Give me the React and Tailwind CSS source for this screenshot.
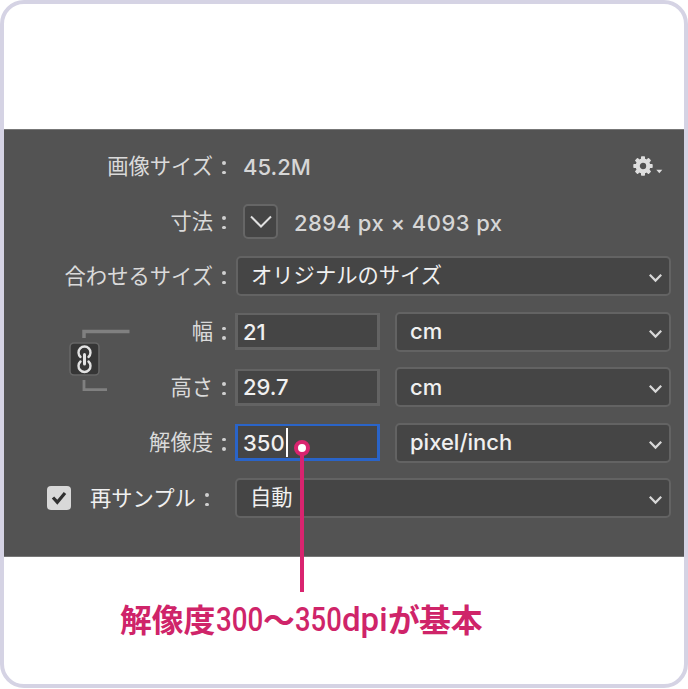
const labelClass =
  "w-[213px] shrink-0 pt-px text-right whitespace-nowrap text-[21.3px] text-[#dadada]";

const Chevron = () => (
  <svg
    className="ml-auto mr-[6px] mt-[4px] shrink-0"
    width="15"
    height="10"
    viewBox="0 0 15 10"
    fill="none"
    stroke="#d8d8d8"
    strokeWidth="2.2"
  >
    <path d="M1.8 1.8 L7.5 7.6 L13.2 1.8" />
  </svg>
);

const Colon = () => (
  <div className="flex w-[23px] shrink-0 flex-col items-center gap-[6px] pr-px pt-[3px]">
    <span className="size-[3.5px] rounded-full bg-[#d0d0d0]" />
    <span className="size-[3.5px] rounded-full bg-[#d0d0d0]" />
  </div>
);

const Label = ({ children }) => (
  <>
    <div className={labelClass}>{children}</div>
    <Colon />
  </>
);

const Select = ({ children, className }) => (
  <div
    className={`flex h-[40px] items-center rounded-[5px] border-2 border-[#636363] bg-[#454545] pl-[13px] text-[#f0f0f0] ${className}`}
  >
    <span className="whitespace-nowrap">{children}</span>
    <Chevron />
  </div>
);

const NumberField = ({ value, active }) => (
  <div
    className={`flex h-[37px] w-[145px] shrink-0 items-center border-[3px] border-t-2 bg-[#454545] pl-[5px] text-[22px] font-medium text-[#f0f0f0] ${
      active ? "border-[#2a64c8]" : "border-[#636363]"
    }`}
  >
    <span className="pt-[2px]">{value}</span>
    {active && <span className="ml-px h-[29px] w-[2px] bg-white" />}
  </div>
);

const LinkBracket = () => (
  <div className="absolute left-[61px] top-[197px]">
    <svg width="66" height="66" viewBox="0 0 66 66" fill="none">
      <path d="M19 11 V4.5 H64.5" stroke="#808080" strokeWidth="3.5" />
      <path d="M19 53 V62.7 H42" stroke="#808080" strokeWidth="2.8" />
      <rect
        x="5"
        y="16"
        width="29"
        height="32"
        rx="4"
        fill="#363636"
        stroke="#666666"
        strokeWidth="1.6"
      />
      <g stroke="#e2e2e2" strokeWidth="2.4" strokeLinecap="round">
        <path d="M15.5 30 A6 6 0 1 1 23.5 30" />
        <path d="M15.5 34.5 A6 6 0 1 0 23.5 34.5" />
        <path d="M19.5 27.5 V37" strokeWidth="3" />
      </g>
    </svg>
  </div>
);

const Gear = () => (
  <svg width="31" height="20" viewBox="0 0 31 20" fill="#dedede">
    {[0, 45, 90, 135, 180, 225, 270, 315].map((angle) => (
      <rect
        key={angle}
        x="8"
        y="0.3"
        width="4"
        height="4.5"
        rx="0.8"
        transform={`rotate(${angle} 10 10)`}
      />
    ))}
    <circle cx="10" cy="10" r="5.3" fill="none" stroke="#dedede" strokeWidth="4.2" />
    <path d="M23.3 13.8 H29.3 L26.3 17.2 Z" />
  </svg>
);

const SizeRow = ({ label, value, unit, active }) => (
  <div className="flex h-[55.5px] items-center">
    <Label>{label}</Label>
    <div className="-ml-px">
      <NumberField value={value} active={active} />
    </div>
    <Select className="ml-[15px] w-[276px] text-[22px] font-medium">
      {unit}
    </Select>
  </div>
);

const SizePanel = () => (
  <div className="relative mt-[125px] h-[428px] w-[680px] border-y border-[#777777] bg-[#535353] pt-[8px] font-['Inter','Noto_Sans_CJK_JP',sans-serif]">
    {/* File size */}
    <div className="flex h-[56px] items-center">
      <div className="-ml-[4px] flex items-center">
        <Label>画像サイズ</Label>
        <span className="ml-[7px] pt-[3px] text-[22px] font-medium text-[#d6d6d6]">
          45.2M
        </span>
      </div>
      <div className="ml-auto mr-[20px] -mt-px">
        <Gear />
      </div>
    </div>

    <div className="-ml-[4px]">
      {/* Dimensions */}
      <div className="flex h-[54.5px] items-center">
        <Label>寸法</Label>
        <div className="ml-[7px] mt-px flex size-[35px] items-center justify-center rounded-[5px] border-2 border-[#666666] bg-[#454545]">
          <svg width="24" height="14" viewBox="0 0 24 14" fill="none">
            <path d="M2 1.5 L12 11.5 L22 1.5" stroke="#e0e0e0" strokeWidth="2" />
          </svg>
        </div>
        <span className="ml-[16px] mt-[4px] whitespace-nowrap text-[22px] font-medium tracking-[0.45px] text-[#d6d6d6]">
          2894 px × 4093 px
        </span>
      </div>

      <div className="flex h-[55.5px] items-center">
        <Label>合わせるサイズ</Label>
        <Select className="w-[435px] text-[21.3px]">
          オリジナルのサイズ
        </Select>
      </div>

      <SizeRow label="幅" value="21" unit="cm" />
      <SizeRow label="高さ" value="29.7" unit="cm" />
      <SizeRow label="解像度" value="350" unit="pixel/inch" active />

      {/* Resample */}
      <div className="flex h-[55.5px] items-center">
        <div className="ml-[47px] flex size-[24px] items-center justify-center rounded-[4px] bg-[#d8d8d8]">
          <svg width="16" height="14" viewBox="0 0 16 14" fill="none">
            <path d="M2 6.5 L6.3 11.2 L14 2" stroke="#303030" strokeWidth="3.2" />
          </svg>
        </div>
        <span className="ml-[19px] w-[106px] whitespace-nowrap pt-px text-[21.3px] text-[#f0f0f0]">
          再サンプル
        </span>
        <Colon />
        <Select className="ml-[16px] w-[436px] text-[21.3px]">自動</Select>
      </div>
    </div>

    <LinkBracket />
  </div>
);

const Callout = () => (
  <div className="absolute left-[290px] top-[436px] flex flex-col items-center">
    <div className="size-4 rounded-full border-4 border-[#d9246f] bg-white" />
    <div className="-mt-px h-[137px] w-1 bg-[#d9246f]" />
  </div>
);

const latinClass = "pt-[2px] font-['Roboto',sans-serif] text-[33px] font-medium";

const Caption = () => (
  <div className="ml-[116px] mt-[38px] flex h-[48px] items-center whitespace-nowrap font-['Noto_Sans_CJK_JP',sans-serif] text-[31.8px] font-bold text-[#cf2469]">
    <span className="w-[96px]">解像度</span>
    <span className={`w-[47px] origin-left scale-x-[0.84] ${latinClass}`}>
      300
    </span>
    <span className="w-[32px]">〜</span>
    <span className={`w-[47px] origin-left scale-x-[0.83] ${latinClass}`}>
      350
    </span>
    <span className={`w-[46px] ${latinClass}`}>dpi</span>
    <span className="w-[31px]">が</span>
    <span>基本</span>
  </div>
);

const App = () => (
  <div className="h-[689px] w-[688px] bg-white">
    <div className="relative h-[688px] w-[688px] overflow-hidden rounded-[24px] border-4 border-[#d5d3e4] bg-white">
      <SizePanel />
      <Caption />
      <Callout />
    </div>
  </div>
);

export default App;
